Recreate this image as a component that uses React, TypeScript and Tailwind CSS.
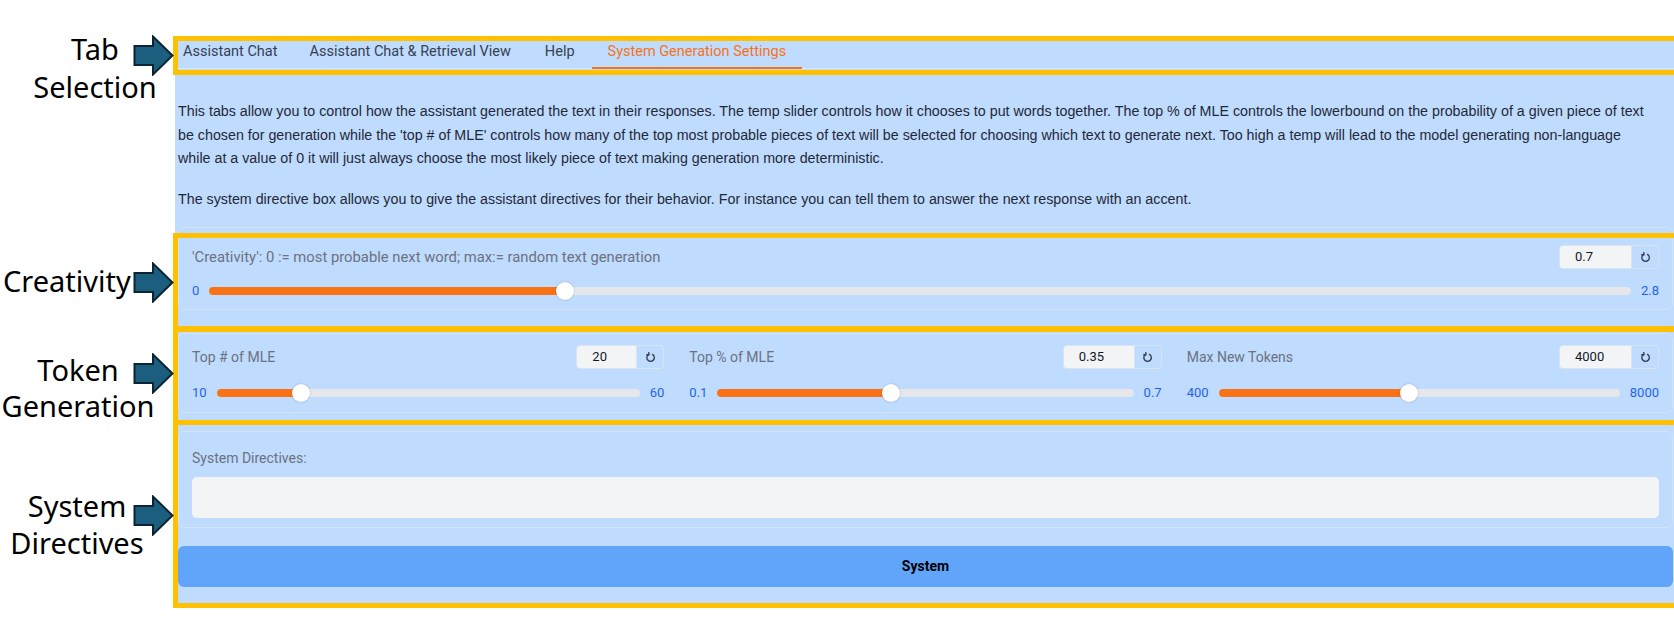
import React from "react";

const ui = { fontFamily: "Roboto, 'Noto Sans', sans-serif" };
const prose = { fontFamily: "'Liberation Sans', Arial, sans-serif" };
const note = { fontFamily: "'Noto Sans', 'Open Sans', sans-serif" };

function ResetIcon() {
  return (
    <svg width="11" height="11" viewBox="0 0 12 12" fill="none" stroke="#374151" strokeWidth="1.5" strokeLinecap="round">
      <path d="M4 2.6 A4.1 4.1 0 1 0 8.2 2.6" />
      <path d="M4.2 0.6 L4.2 3 L1.9 3" />
    </svg>
  );
}

function NumBox({ value, w }: { value: string; w: string }) {
  return (
    <div className="flex h-[24px] rounded-[4px] border border-[#d9e4f3] overflow-hidden">
      <div className={`${w} bg-[#f3f4f6] pl-[15px] flex items-center text-[13px] text-[#111827]`}>{value}</div>
      <div className="w-[27px] flex items-center justify-center border-l border-[#d9e4f3]">
        <ResetIcon />
      </div>
    </div>
  );
}

function Slider({ min, max, pct }: { min: string; max: string; pct: number }) {
  return (
    <div className="flex items-center gap-[10px] h-[18px]">
      <span className="text-[13px] text-[#2563eb]">{min}</span>
      <div className="relative flex-1 h-[8px] rounded-full bg-[#e5e7eb]">
        <div className="absolute left-0 top-0 h-[8px] rounded-full bg-[#f97316]" style={{ width: `${pct}%` }} />
        <div
          className="absolute top-[-5px] w-[18px] h-[18px] rounded-full bg-white shadow-[0_0_2px_rgba(0,0,0,0.25)]"
          style={{ left: `calc(${pct}% - 9px)` }}
        />
      </div>
      <span className="text-[13px] text-[#2563eb]">{max}</span>
    </div>
  );
}

function Arrow({ top }: { top: string }) {
  return (
    <svg className={`absolute left-[133px] ${top}`} width="41" height="41" viewBox="0 0 41 41">
      <polygon points="1.5,11 20,11 20,1.5 39.5,20.5 20,39.5 20,30 1.5,30" fill="#1b5e7e" stroke="#0c2433" strokeWidth="2" strokeLinejoin="miter" />
    </svg>
  );
}

function YellowBox({ cls }: { cls: string }) {
  return <div className={`absolute left-[173px] right-[-10px] border-[5px] border-[#ffc000] pointer-events-none ${cls}`} />;
}

export default function App() {
  return (
    <div className="relative w-[1674px] h-[623px] bg-white overflow-hidden" style={ui}>
      {/* Panel */}
      <div className="ml-[175px] mt-[38px] pl-[3px] pb-[17px] bg-[#bfdbfe] w-[1499px]">
        {/* Tabs */}
        <div className="flex h-[31px] border-b border-[#dde6f2] text-[14.5px] text-[#374151]">
          <div className="h-full flex items-center pb-[3px] pl-[5px] pr-[15px]">Assistant Chat</div>
          <div className="h-full flex items-center pb-[3px] px-[17px]">Assistant Chat &amp; Retrieval View</div>
          <div className="h-full flex items-center pb-[3px] px-[17px]">Help</div>
          <div className="relative h-full flex items-center pb-[3px] px-[16px] text-[#f97316]">
            System Generation Settings
            <div className="absolute left-0 right-0 bottom-[-1px] h-[2px] bg-[#f97316]" />
          </div>
        </div>

        {/* Description */}
        <div className="pt-[31px] text-[14.27px] leading-[23.5px] text-[#1f2937]" style={prose}>
          <p>
            <span className="block whitespace-nowrap">
              This tabs allow you to control how the assistant generated the text in their responses. The temp slider controls how it chooses to put words together. The top % of MLE controls the lowerbound on the probability of a given piece of text
            </span>
            <span className="block whitespace-nowrap">
              be chosen for generation while the 'top # of MLE' controls how many of the top most probable pieces of text will be selected for choosing which text to generate next. Too high a temp will lead to the model generating non-language
            </span>
            <span className="block whitespace-nowrap">
              while at a value of 0 it will just always choose the most likely piece of text making generation more deterministic.
            </span>
          </p>
          <p className="mt-[17px] whitespace-nowrap">
            The system directive box allows you to give the assistant directives for their behavior. For instance you can tell them to answer the next response with an accent.
          </p>
        </div>

        {/* Creativity */}
        <div className="mt-[16px] w-[1495px] rounded-[6px] border border-[#d6e3f4] px-[13px] pt-[17px] pb-[9px]">
          <div className="flex items-center justify-between h-[24px]">
            <span className="text-[14.8px] text-[#6b7280]">'Creativity': 0 := most probable next word; max:= random text generation</span>
            <NumBox value="0.7" w="w-[71px]" />
          </div>
          <div className="mt-[13px]">
            <Slider min="0" max="2.8" pct={25} />
          </div>
        </div>

        {/* Token generation */}
        <div className="mt-[23px] w-[1495px] rounded-[6px] border border-[#d6e3f4] px-[13px] pt-[11px] pb-[10px] grid grid-cols-3 gap-x-[25px]">
          <div>
            <div className="flex items-center justify-between h-[24px]">
              <span className="text-[14px] text-[#6b7280]">Top # of MLE</span>
              <NumBox value="20" w="w-[59px]" />
            </div>
            <div className="mt-[15px]">
              <Slider min="10" max="60" pct={20} />
            </div>
          </div>
          <div>
            <div className="flex items-center justify-between h-[24px]">
              <span className="text-[14px] text-[#6b7280]">Top % of MLE</span>
              <NumBox value="0.35" w="w-[70px]" />
            </div>
            <div className="mt-[15px]">
              <Slider min="0.1" max="0.7" pct={41.67} />
            </div>
          </div>
          <div>
            <div className="flex items-center justify-between h-[24px]">
              <span className="text-[14px] text-[#6b7280]">Max New Tokens</span>
              <NumBox value="4000" w="w-[71px]" />
            </div>
            <div className="mt-[15px]">
              <Slider min="400" max="8000" pct={47.37} />
            </div>
          </div>
        </div>

        {/* System directives */}
        <div className="mt-[18px] w-[1495px] rounded-[6px] border border-[#d6e3f4] px-[13px] pt-[17px] pb-[9px]">
          <div className="h-[18px] flex items-center text-[14px] text-[#6b7280]">System Directives:</div>
          <div className="mt-[10px] h-[41px] rounded-[5px] bg-[#f3f4f6]" />
        </div>

        <button className="mt-[18px] w-[1495px] h-[41px] rounded-[6px] bg-[#60a5fa] text-[14px] font-bold text-black">
          System
        </button>
      </div>

      {/* Annotation boxes */}
      <YellowBox cls="top-[36px] h-[39px]" />
      <YellowBox cls="top-[233px] h-[98px]" />
      <YellowBox cls="top-[327px] h-[98px]" />
      <YellowBox cls="top-[420px] h-[188px]" />

      {/* Annotation labels */}
      <div className="absolute left-[20px] top-[30px] w-[150px] text-center text-[29px] leading-[38px] text-black" style={note}>
        <div>Tab</div>
        <div>Selection</div>
      </div>
      <Arrow top="top-[35px]" />

      <div className="absolute left-[3px] top-[262px] text-[29px] leading-[38px] text-black" style={note}>
        Creativity
      </div>
      <Arrow top="top-[262px]" />

      <div className="absolute left-[-2px] top-[352px] w-[160px] text-center text-[29px] leading-[36px] text-black" style={note}>
        <div>Token</div>
        <div>Generation</div>
      </div>
      <Arrow top="top-[353px]" />

      <div className="absolute left-[0px] top-[487px] w-[154px] text-center text-[29px] leading-[37px] text-black" style={note}>
        <div>System</div>
        <div>Directives</div>
      </div>
      <Arrow top="top-[495px]" />
    </div>
  );
}
